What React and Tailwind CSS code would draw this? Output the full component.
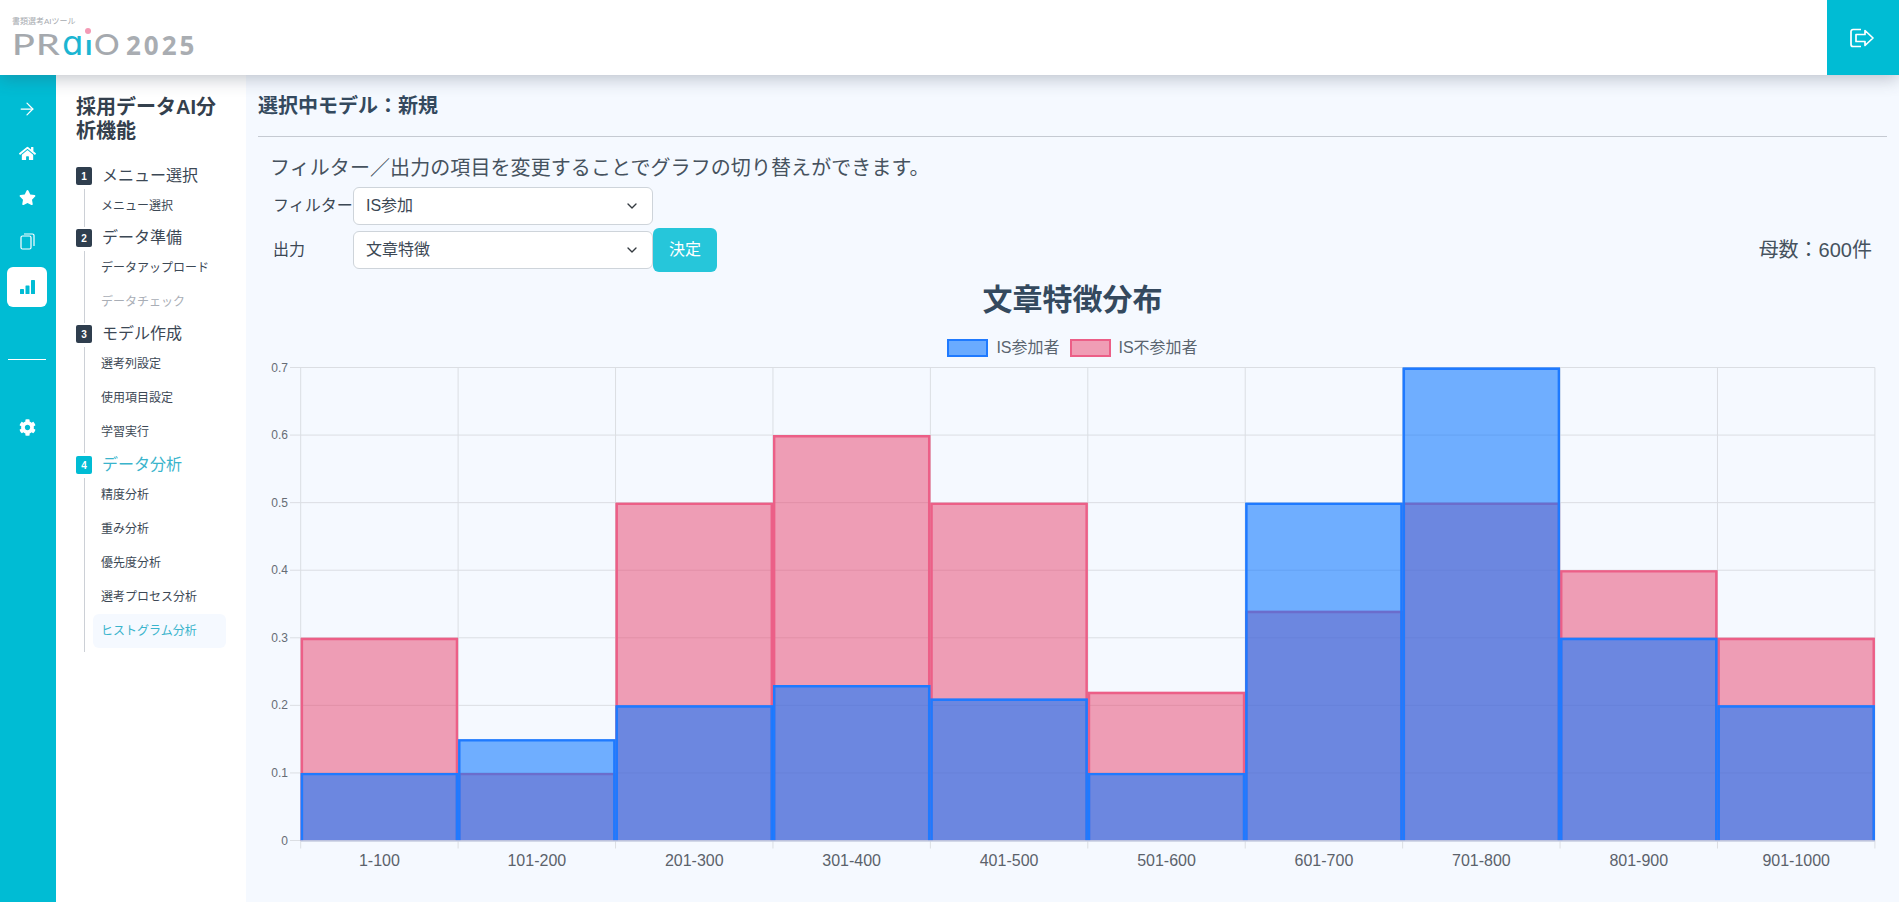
import React from 'react';
import { FaHome, FaStar, FaCog } from 'react-icons/fa';
import { ArrowRight, ChevronDown } from 'lucide-react';

const FONT = '"Liberation Sans","Noto Sans CJK JP",sans-serif';

const menu = [
  { no: 1, title: 'メニュー選択', items: [{ label: 'メニュー選択' }] },
  { no: 2, title: 'データ準備', items: [{ label: 'データアップロード' }, { label: 'データチェック', disabled: true }] },
  { no: 3, title: 'モデル作成', items: [{ label: '選考列設定' }, { label: '使用項目設定' }, { label: '学習実行' }] },
  {
    no: 4,
    title: 'データ分析',
    active: true,
    items: [
      { label: '精度分析' },
      { label: '重み分析' },
      { label: '優先度分析' },
      { label: '選考プロセス分析' },
      { label: 'ヒストグラム分析', active: true },
    ],
  },
];

const bins = [
  { label: '1-100', blue: 0.1, pink: 0.3 },
  { label: '101-200', blue: 0.15, pink: 0.1 },
  { label: '201-300', blue: 0.2, pink: 0.5 },
  { label: '301-400', blue: 0.23, pink: 0.6 },
  { label: '401-500', blue: 0.21, pink: 0.5 },
  { label: '501-600', blue: 0.1, pink: 0.22 },
  { label: '601-700', blue: 0.5, pink: 0.34 },
  { label: '701-800', blue: 0.7, pink: 0.5 },
  { label: '801-900', blue: 0.3, pink: 0.4 },
  { label: '901-1000', blue: 0.2, pink: 0.3 },
];

// チャート座標（svg内）
const LEFT = 42.7;
const STEP = 157.42;
const TOP = 9.5;
const BASE = 482.5;
const yOf = (v) => BASE - (v / 0.7) * (BASE - TOP);

function Bar({ i, value, fill, stroke }) {
  const x = LEFT + STEP * i;
  const y = yOf(value);
  const sw = 2.4;
  return (
    <g>
      <rect x={x} y={y} width={STEP} height={BASE - y} fill={fill} />
      <path
        d={`M${x + sw / 2} ${BASE} V${y + sw / 2} H${x + STEP - sw / 2} V${BASE}`}
        fill="none"
        stroke={stroke}
        strokeWidth={sw}
      />
    </g>
  );
}

function Chart() {
  const ticks = [0, 0.1, 0.2, 0.3, 0.4, 0.5, 0.6, 0.7];
  const right = LEFT + STEP * 10;
  return (
    <svg width="1629" height="518" viewBox="0 0 1629 518" className="block">
      {ticks.map((t) => (
        <g key={t}>
          <line x1={32} x2={right} y1={yOf(t)} y2={yOf(t)} stroke="#dbdee3" strokeWidth="1" />
          <text x={30} y={yOf(t) + 4} textAnchor="end" fontSize="12" fill="#666c75" fontFamily={FONT}>
            {t}
          </text>
        </g>
      ))}
      {Array.from({ length: 11 }).map((_, i) => (
        <line
          key={i}
          x1={LEFT + STEP * i}
          x2={LEFT + STEP * i}
          y1={TOP}
          y2={BASE + 8}
          stroke="#dbdee3"
          strokeWidth="1"
        />
      ))}
      {bins.map((b, i) => (
        <Bar key={`p${i}`} i={i} value={b.pink} fill="rgba(232,65,107,0.5)" stroke="#ec5f87" />
      ))}
      {bins.map((b, i) => (
        <Bar key={`b${i}`} i={i} value={b.blue} fill="rgba(13,119,255,0.58)" stroke="#1f7aff" />
      ))}
      <line x1={LEFT} x2={right} y1={BASE + 0.5} y2={BASE + 0.5} stroke="#c6cde0" strokeWidth="1.5" />
      {bins.map((b, i) => (
        <text
          key={b.label}
          x={LEFT + STEP * (i + 0.5)}
          y={508}
          textAnchor="middle"
          fontSize="16"
          fill="#5b626b"
          fontFamily={FONT}
        >
          {b.label}
        </text>
      ))}
    </svg>
  );
}

function RailIcon({ children, className = '' }) {
  return <div className={`flex h-[44px] w-full items-center justify-center text-white ${className}`}>{children}</div>;
}

function Rail() {
  return (
    <div className="flex w-[56px] shrink-0 flex-col items-center bg-[#00bcd4] pr-[2px] pt-[12px]">
      <RailIcon>
        <ArrowRight size={20} strokeWidth={1.5} />
      </RailIcon>
      <RailIcon>
        <FaHome size={17} />
      </RailIcon>
      <RailIcon>
        <FaStar size={17} />
      </RailIcon>
      <RailIcon>
        <svg width="15" height="17" viewBox="0 0 15 17" fill="none" stroke="currentColor" strokeWidth="1.2">
          <rect x="1" y="3" width="10" height="13" rx="1.5" />
          <path d="M4 1h8.5a1.5 1.5 0 0 1 1.5 1.5V13" />
        </svg>
      </RailIcon>
      <div className="mt-[4px] flex h-[40px] w-[40px] items-center justify-center rounded-[6px] bg-white text-[#00bcd4]">
        <svg width="15" height="14" viewBox="0 0 15 14" fill="currentColor">
          <rect x="0" y="9" width="4" height="5" rx="0.6" />
          <rect x="5.5" y="5.5" width="4" height="8.5" rx="0.6" />
          <rect x="11" y="0" width="4" height="14" rx="0.6" />
        </svg>
      </div>
      <div className="mt-[52px] h-px w-[38px] bg-white" />
      <RailIcon className="mt-[45px]">
        <FaCog size={17} />
      </RailIcon>
    </div>
  );
}

function Sidebar() {
  return (
    <div className="w-[190px] shrink-0 bg-white pl-[20px] pr-[20px] pt-[20px]">
      <h2 className="text-[20px] font-bold leading-[24px] text-[#34404d]">採用データAI分析機能</h2>
      <div className="mt-[22px] flex flex-col">
        {menu.map((group) => (
          <div key={group.no} className={group.no === 4 ? 'mt-[1px]' : ''}>
            <div className="mb-[2px] flex h-[22px] items-center">
              <span
                className={`flex h-[18px] w-[16px] items-center justify-center rounded-[2px] text-[10px] font-bold text-white ${
                  group.active ? 'bg-[#00bcd4]' : 'bg-[#2f3e4e]'
                }`}
              >
                {group.no}
              </span>
              <span className={`ml-[10px] text-[16px] ${group.active ? 'text-[#3ab4cc]' : 'text-[#3c4855]'}`}>
                {group.title}
              </span>
            </div>
            <div className="ml-[8px] border-l border-[#ccd0d6] pb-[4px] pl-[8px]">
              {group.items.map((item) => (
                <div
                  key={item.label}
                  className={`flex h-[34px] items-center rounded-[6px] px-[8px] text-[12px] ${
                    item.active ? 'bg-[#f5f9ff] text-[#3ab4cc]' : item.disabled ? 'text-[#a9aeb6]' : 'text-[#3c4855]'
                  }`}
                >
                  {item.label}
                </div>
              ))}
            </div>
          </div>
        ))}
      </div>
    </div>
  );
}

function SelectBox({ value }) {
  return (
    <div className="flex h-[38px] w-[300px] items-center justify-between rounded-[6px] border border-[#ced4da] bg-white pl-[12px] pr-[12px] text-[16px] text-[#3c4855]">
      <span>{value}</span>
      <ChevronDown size={16} strokeWidth={2} className="text-[#343a40]" />
    </div>
  );
}

function Legend({ boxClass, label }) {
  return (
    <div className="flex items-center gap-[8px]">
      <span className={`h-[18px] w-[41px] border-2 ${boxClass}`} />
      <span className="text-[16px] text-[#5b6570]">{label}</span>
    </div>
  );
}

function Main() {
  return (
    <div className="min-w-0 flex-1 bg-[#f5f9ff] pl-[12px] pr-[12px]">
      <div className="flex h-[62px] items-center border-b border-[#c5cad2] text-[20px] font-bold text-[#34495e]">
        選択中モデル：新規
      </div>
      <p className="mt-[18px] pl-[12px] text-[20px] leading-[26px] tracking-[0.08px] text-[#46525e]">
        フィルター／出力の項目を変更することでグラフの切り替えができます。
      </p>
      <div className="mt-[6px] flex h-[38px] items-center pl-[15px] text-[16px] text-[#3c4855]">
        <span className="w-[80px] shrink-0 whitespace-nowrap">フィルター</span>
        <SelectBox value="IS参加" />
      </div>
      <div className="mt-[3px] flex h-[44px] items-center pl-[15px] pr-[15px] text-[16px] text-[#3c4855]">
        <span className="w-[80px] shrink-0">出力</span>
        <SelectBox value="文章特徴" />
        <button className="h-[44px] w-[64px] rounded-[6px] bg-[#26c6da] text-[16px] text-white">決定</button>
        <span className="ml-auto text-[20px] text-[#46525e]">母数：600件</span>
      </div>
      <h1 className="mt-[8px] text-center text-[30px] font-bold leading-[40px] text-[#34495e]">文章特徴分布</h1>
      <div className="mt-[18px] flex h-[20px] items-center justify-center gap-[10px]">
        <Legend boxClass="border-[#1f7aff] bg-[#6aabff]" label="IS参加者" />
        <Legend boxClass="border-[#ec5f87] bg-[#f09db5]" label="IS不参加者" />
      </div>
      <div>
        <Chart />
      </div>
    </div>
  );
}

function Logo() {
  return (
    <div className="flex flex-col pl-[12px] pt-[17px]">
      <span className="text-[8px] leading-[10px] text-[#a7abb0]">書類選考AIツール</span>
      <div className="flex h-[32px] items-baseline" style={{ fontFamily: 'Lato, sans-serif' }}>
        <span className="w-[50px] origin-left scale-x-[1.3] text-[29px] font-medium leading-[32px] tracking-[1px] text-[#a5a9ae]">
          PR
        </span>
        <span
          className="w-[23px] text-[34px] font-medium leading-[32px] text-[#1cb5d2]"
          style={{ fontFamily: '"DejaVu Sans", sans-serif' }}
        >
          ɑ
        </span>
        <span className="relative w-[9px] text-[29px] font-bold leading-[32px] text-[#1cb5d2]">
          ı
          <span className="absolute left-[0px] top-[0px] h-[6px] w-[6px] rounded-full bg-[#f49ab5]" />
        </span>
        <span className="w-[24px] origin-left scale-x-[1.1] text-[29px] font-medium leading-[32px] text-[#a5a9ae]">O</span>
        <span
          className="ml-[8px] text-[26px] font-bold leading-[32px] tracking-[3px] text-[#a9adb2]"
          style={{ fontFamily: '"Open Sans", sans-serif' }}
        >
          2025
        </span>
      </div>
    </div>
  );
}

export default function App() {
  return (
    <div className="flex h-screen flex-col overflow-hidden bg-[#f5f9ff]" style={{ fontFamily: FONT }}>
      <header className="relative z-10 flex h-[75px] shrink-0 items-stretch justify-between bg-white shadow-[0_4px_16px_rgba(60,70,90,0.3)]">
        <Logo />
        <div className="flex w-[72px] items-center justify-center bg-[#00bcd4] text-white">
          <svg width="26" height="20" viewBox="0 0 26 20" fill="none" stroke="currentColor" strokeWidth="1.7">
            <path d="M11 1.5H3a2 2 0 0 0-2 2v13a2 2 0 0 0 2 2h8" />
            <path d="M6 6.5h9V2.5l8 7.5-8 7.5v-4H6z" strokeLinejoin="round" />
          </svg>
        </div>
      </header>
      <div className="flex min-h-0 flex-1">
        <Rail />
        <Sidebar />
        <Main />
      </div>
    </div>
  );
}
